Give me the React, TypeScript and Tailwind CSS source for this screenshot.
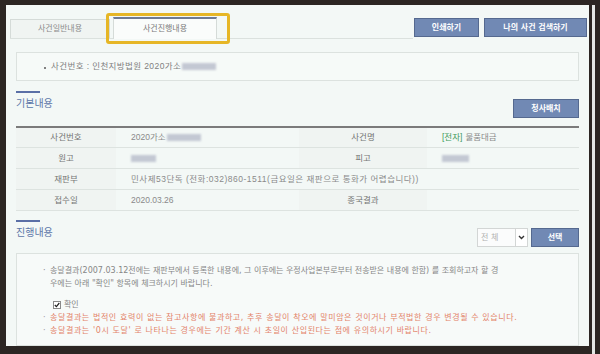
import React from "react";

function BlurBox({ className }: { className: string }) {
  return <span className={"inline-block align-middle bg-[#c3c8d3] blur-[1.2px] " + className} />;
}

function Btn({ children, className }: { children: React.ReactNode; className: string }) {
  return (
    <div
      className={
        "flex items-center justify-center bg-[#7189b4] border border-[#55698f] text-white text-[8px] font-bold leading-none " +
        className
      }
    >
      {children}
    </div>
  );
}

function Heading({ title }: { title: string }) {
  return (
    <div className="flex flex-col">
      <div className="w-[24px] h-[2px] bg-[#5a6fa6]" />
      <span className="mt-[5px] text-[10px] leading-[12px] text-[#5b76a8]">{title}</span>
    </div>
  );
}

function Label({ children, className = "" }: { children?: React.ReactNode; className?: string }) {
  return (
    <div className={"flex items-center justify-center bg-[#f0f4f2] text-[#747474] " + className}>{children}</div>
  );
}

function Val({ children, className = "" }: { children?: React.ReactNode; className?: string }) {
  return <div className={"flex items-center pl-[15px] text-[#8a8a8a] whitespace-nowrap " + className}>{children}</div>;
}

export default function App() {
  return (
    <div className="w-[600px] h-[354px] bg-[#2c2623] flex items-start pt-[5px] pl-[6px] overflow-hidden font-['DejaVu_Sans','Noto_Sans_CJK_KR',sans-serif]">
      <div className="w-[583px] h-[341px] bg-[#f3f8f6] flex flex-col overflow-hidden">
        {/* tab row */}
        <div className="mt-[12px] ml-[4px] mr-[2px] h-[22px] flex items-stretch">
          <div className="w-[403px] flex items-end border-b border-[#dbe1de]">
            <div className="w-[100px] h-[19px] border border-b-0 border-[#d5dbd8] bg-[#f0f4f2] flex items-center justify-center text-[8px] text-[#8a8a8a]">
              사건일반내용
            </div>
            <div className="relative w-[104px] h-[22px] -mb-px ml-[3px] bg-[#fafcfb] border-x border-[#d5dbd8] border-t-2 border-t-[#6e7b94] flex items-center justify-center text-[8px] text-[#7a7a7a]">
              사건진행내용
              <div className="absolute -left-[8px] -right-[14px] -top-[6px] -bottom-[5px] border-[3px] border-[#e6b626] rounded-[3px]" />
            </div>
          </div>
          <Btn className="ml-[1px] mt-[1px] w-[65px] h-[19px]">인쇄하기</Btn>
          <Btn className="ml-[5px] mt-[1px] w-[103px] h-[19px]">나의 사건 검색하기</Btn>
        </div>

        {/* case number box */}
        <div className="mt-[13px] mx-[10px] h-[29px] border border-[#dce2df] bg-[#f6faf8] flex items-center pl-[27px] text-[8.5px] text-[#808080] font-['Liberation_Sans','Noto_Sans_CJK_KR',sans-serif]">
          <span className="w-[2px] h-[2px] bg-[#808080] mt-[3px] mr-[5px]" />
          <span className="whitespace-nowrap tracking-[0.4px]">사건번호 : 인천지방법원 2020가소</span>
          <BlurBox className="ml-[1px] w-[34px] h-[7px]" />
        </div>

        {/* 기본내용 */}
        <div className="mt-[10px] mx-[10px] flex justify-between items-start">
          <Heading title="기본내용" />
          <Btn className="mt-[8px] w-[66px] h-[19px]">청사배치</Btn>
        </div>

        <div className="mt-[8px] mx-[10px] border-t-2 border-[#7b7b7b] text-[8.5px] font-['Liberation_Sans','Noto_Sans_CJK_KR',sans-serif]">
          <div className="grid grid-cols-[100px_183px_128px_153px] h-[20px] border-b border-[#dde3e0]">
            <Label>사건번호</Label>
            <Val>
              2020가소
              <BlurBox className="ml-[1px] w-[34px] h-[7px]" />
            </Val>
            <Label>사건명</Label>
            <Val>
              <span className="text-[#3d9a5c]">[전자]</span>
              <span className="ml-[3px]">물품대금</span>
            </Val>
          </div>
          <div className="grid grid-cols-[100px_183px_128px_153px] h-[21px] border-b border-[#dde3e0]">
            <Label>원고</Label>
            <Val>
              <BlurBox className="w-[25px] h-[7px]" />
            </Val>
            <Label>피고</Label>
            <Val>
              <BlurBox className="w-[27px] h-[7px]" />
            </Val>
          </div>
          <div className="grid grid-cols-[100px_183px_128px_153px] h-[21px] border-b border-[#dde3e0]">
            <Label>재판부</Label>
            <Val className="col-span-3 tracking-[0.5px]">민사제53단독 (전화:032)860-1511(금요일은 재판으로 통화가 어렵습니다))</Val>
          </div>
          <div className="grid grid-cols-[100px_183px_128px_153px] h-[21px] border-b border-[#dde3e0]">
            <Label>접수일</Label>
            <Val>2020.03.26</Val>
            <Label>종국결과</Label>
            <Val />
          </div>
        </div>

        {/* 진행내용 */}
        <div className="mt-[9px] mx-[10px] flex justify-between items-start">
          <Heading title="진행내용" />
          <div className="mt-[8px] flex h-[19px]">
            <div className="w-[51px] border border-[#d3d6d5] bg-[#fbfcfc] flex">
              <span className="flex-1 pl-[3px] flex items-center text-[8px] text-[#b0b0b0]">전 체</span>
              <span className="w-[12px] border-l border-[#d3d6d5] bg-white flex items-center justify-center">
                <svg width="7" height="5" viewBox="0 0 7 5">
                  <path d="M1 1 L3.5 3.5 L6 1" fill="none" stroke="#333" strokeWidth="1.4" />
                </svg>
              </span>
            </div>
            <Btn className="ml-[3px] w-[48px] h-[19px]">선택</Btn>
          </div>
        </div>

        <div className="mt-[6px] mx-[10px] flex-1 border border-[#dce2df] bg-[#f7faf9] pt-[10px] pl-[26px] text-[8px] leading-[13px] whitespace-nowrap">
          <div className="flex text-[#868686]">
            <span className="w-[7px]">·</span>
            <span>
              송달결과(2007.03.12전에는 재판부에서 등록한 내용에, 그 이후에는 우정사업본부로부터 전송받은 내용에 한함) 를 조회하고자 할 경
              <br />
              우에는 아래 "확인" 항목에 체크하시기 바랍니다.
            </span>
          </div>
          <div className="mt-[8px] ml-[10px] flex items-center h-[13px] text-[#868686]">
            <span className="w-[8px] h-[8px] border border-[#8a8a8a] bg-white flex items-center justify-center">
              <svg width="6" height="6" viewBox="0 0 6 6">
                <path d="M0.8 3 L2.4 4.6 L5.3 1" fill="none" stroke="#222" strokeWidth="1.2" />
              </svg>
            </span>
            <span className="ml-[3px]">확인</span>
          </div>
          <div className="flex text-[#e3836a] tracking-[0.6px]">
            <span className="w-[7px] text-[#999]">·</span>
            <span>송달결과는 법적인 효력이 없는 참고사항에 불과하고, 추후 송달이 착오에 말미암은 것이거나 부적법한 경우 변경될 수 있습니다.</span>
          </div>
          <div className="flex text-[#e3836a] tracking-[0.6px]">
            <span className="w-[7px] text-[#999]">·</span>
            <span>송달결과는 '0시 도달' 로 나타나는 경우에는 기간 계산 시 초일이 산입된다는 점에 유의하시기 바랍니다.</span>
          </div>
        </div>
      </div>
      <div className="w-[3px] h-[349px] ml-[3px] bg-[#e4e7e5]" />
    </div>
  );
}
